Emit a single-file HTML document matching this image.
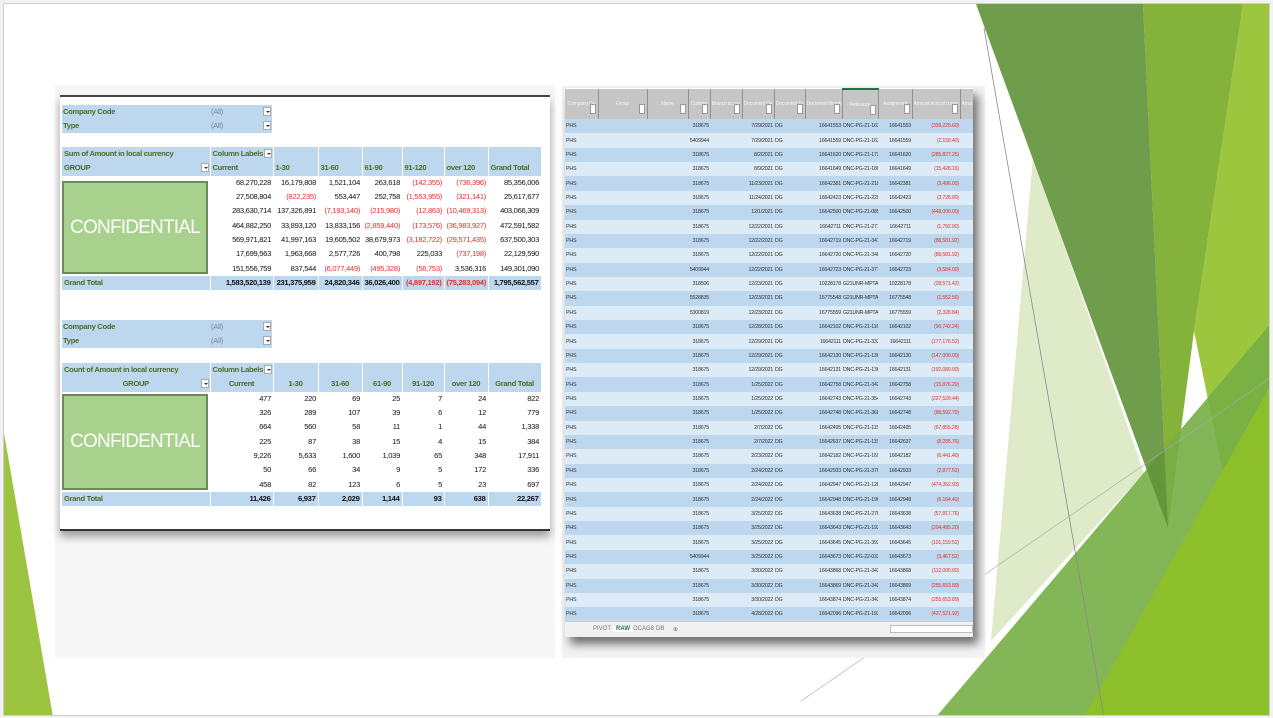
<!DOCTYPE html>
<html><head><meta charset="utf-8">
<style>
*{margin:0;padding:0;box-sizing:border-box}
html,body{width:1273px;height:718px;overflow:hidden;background:#f2f2f2}
#slide{position:absolute;left:3px;top:3px;width:1267px;height:713px;background:#fff;border:1px solid #cfcfcf;overflow:hidden}
svg.bg{position:absolute;left:0;top:0}
.abs{position:absolute}
#leftwrap{left:55px;top:85px;width:500px;height:573px;background:#f6f6f6}
#piv{left:60px;top:95px;width:490px;height:436px;background:#fff;border-top:2px solid #444;border-bottom:2px solid #333;box-shadow:0 6px 8px rgba(0,0,0,.35)}
.pt{position:absolute;left:62px;width:479px;border-collapse:collapse;table-layout:fixed;font-family:"Liberation Sans Narrow","Liberation Sans",sans-serif;font-size:7.6px;letter-spacing:-0.3px;color:#111}
.pt td{padding:0 2px;white-space:nowrap;overflow:hidden;line-height:14px;height:14.3px;position:relative}
.pt .h td{background:#bdd7ee;color:#4c6a24;font-weight:bold;border-right:1px solid #fff}
.pt .d td{text-align:right}
.pt .g td{background:#bdd7ee;font-weight:bold;text-align:right;border-right:1px solid #fff}
.pt .g td:first-child{text-align:left;color:#4c6a24}
.r{color:#e8302c}
.dd{display:block;position:absolute;right:1px;top:2px;width:8px;height:9px;background:#fff;border:1px solid #aaa}
.dd:after{content:"";position:absolute;left:2px;top:3px;border-left:2px solid transparent;border-right:2px solid transparent;border-top:2px solid #333}
.flt{position:absolute;left:62px;width:210px;height:28px;background:#bdd7ee;font-family:"Liberation Sans Narrow","Liberation Sans",sans-serif;font-size:7.6px;letter-spacing:-0.3px;font-weight:bold;color:#4c6a24}
.flt div{position:absolute;left:1px;height:14px;line-height:14px}
.flt span.v{position:absolute;left:149px;line-height:14px;color:#7a8a9a;font-weight:normal}
.flt .dd{left:201px;right:auto}
.conf{position:absolute;left:62px;width:146px;background:#a9d18e;border:2px solid #6d8a5a;color:#fff;font-family:"Liberation Sans","DejaVu Sans",sans-serif;font-size:19px;text-align:center;letter-spacing:-0.8px;overflow:hidden;white-space:nowrap}
#rwrap{left:562px;top:86px;width:423px;height:572px;background:#f3f3f3}
#sheet{left:565px;top:88px;width:408px;height:549px;background:#fff;box-shadow:5px 7px 9px rgba(0,0,0,.55);overflow:hidden}
.st{border-collapse:collapse;table-layout:fixed;width:408px;font-family:"Liberation Sans Narrow","Liberation Sans",sans-serif;font-size:5.3px;letter-spacing:-0.2px;color:#333}
.st td{white-space:nowrap;overflow:hidden;padding:0 1px;height:14.37px;line-height:14px}
.st tr.hd td{height:30px;background:#c6c6c6;color:#f4f4f4;border-right:1px solid #8e8e8e;text-align:center;position:relative;font-size:5px}
.st tr.hd td i{position:absolute;right:2px;top:15px;width:6px;height:10px;background:#fff;border:1px solid #999}
.st tr:nth-child(even) td{background:#bdd7ee}
.st tr:nth-child(odd):not(.hd) td{background:#ddebf7}
.st td.n{text-align:right}
.st td.a{text-align:right;color:#e8302c}
#tabs{position:absolute;left:0;top:533px;width:408px;height:16px;background:#f0f0f0;border-top:1px solid #ccc;font-family:"Liberation Sans",sans-serif;font-size:6px;color:#777}
#tabs span{position:absolute;top:4px}
</style></head><body>
<div id="slide">
<svg class="bg" width="1267" height="713" viewBox="3 3 1267 713">
 <polygon points="3,432 52,716 3,716" fill="#9cc440"/>
 <polygon points="1032,156 1143,472 990,640" fill="#dfeac8"/>
 <polygon points="1242,3 1272,3 1272,716 1193,330" fill="#9cc63e"/>
 <polygon points="1142,3 1242,3 1193,330 1167,527" fill="#85b23a"/>
 <polygon points="935,716 1272,320 1272,716" fill="#76ae45" opacity="0.9"/>
 <polygon points="975,3 1142,3 1167,527" fill="#5f9238" opacity="0.9"/>
 <polygon points="1083,716 1272,380 1272,716" fill="#8dbf2b"/>
 <line x1="983" y1="27" x2="1103" y2="716" stroke="#8a8a8a" stroke-width="0.8"/>
 <line x1="800" y1="700" x2="1272" y2="375" stroke="#aaa" stroke-width="0.6"/>
</svg>
</div>

<div class="abs" id="leftwrap"></div>
<div class="abs" id="piv"></div>

<div class="flt" style="top:105px"><div style="top:0">Company Code</div><div style="top:14px">Type</div><span class="v" style="top:0">(All)</span><span class="v" style="top:14px">(All)</span><i class="dd" style="top:2px"></i><i class="dd" style="top:16px"></i></div>

<table class="pt" style="top:147px">
<colgroup><col style="width:148px"><col style="width:63px"><col style="width:45px"><col style="width:44px"><col style="width:40px"><col style="width:42px"><col style="width:44px"><col style="width:53px"></colgroup>
<tr class="h"><td>Sum of Amount in local currency</td><td>Column Labels<i class="dd"></i></td><td></td><td></td><td></td><td></td><td></td><td></td></tr>
<tr class="h"><td>GROUP<i class="dd"></i></td><td>Current</td><td>1-30</td><td>31-60</td><td>61-90</td><td>91-120</td><td>over 120</td><td>Grand Total</td></tr>
<tr class="d"><td></td><td>68,270,228</td><td>16,179,808</td><td>1,521,104</td><td>263,618</td><td class="r">(142,355)</td><td class="r">(736,396)</td><td>85,356,006</td></tr>
<tr class="d"><td></td><td>27,508,804</td><td class="r">(822,235)</td><td>553,447</td><td>252,758</td><td class="r">(1,553,955)</td><td class="r">(321,141)</td><td>25,617,677</td></tr>
<tr class="d"><td></td><td>283,630,714</td><td>137,326,891</td><td class="r">(7,193,140)</td><td class="r">(215,980)</td><td class="r">(12,863)</td><td class="r">(10,469,313)</td><td>403,066,309</td></tr>
<tr class="d"><td></td><td>464,882,250</td><td>33,893,120</td><td>13,833,156</td><td class="r">(2,859,440)</td><td class="r">(173,576)</td><td class="r">(36,983,927)</td><td>472,591,582</td></tr>
<tr class="d"><td></td><td>569,971,821</td><td>41,997,163</td><td>19,605,502</td><td>38,679,973</td><td class="r">(3,182,722)</td><td class="r">(29,571,435)</td><td>637,500,303</td></tr>
<tr class="d"><td></td><td>17,699,563</td><td>1,963,668</td><td>2,577,726</td><td>400,798</td><td>225,033</td><td class="r">(737,198)</td><td>22,129,590</td></tr>
<tr class="d"><td></td><td>151,556,759</td><td>837,544</td><td class="r">(6,077,449)</td><td class="r">(495,328)</td><td class="r">(56,753)</td><td>3,536,316</td><td>149,301,090</td></tr>
<tr class="g"><td>Grand Total</td><td>1,583,520,139</td><td>231,375,959</td><td>24,820,346</td><td>36,026,400</td><td class="r">(4,897,192)</td><td class="r">(75,283,094)</td><td>1,795,562,557</td></tr>
</table>
<div class="conf" style="top:181px;height:93px;line-height:89px">CONFIDENTIAL</div>

<div class="flt" style="top:320px"><div style="top:0">Company Code</div><div style="top:14px">Type</div><span class="v" style="top:0">(All)</span><span class="v" style="top:14px">(All)</span><i class="dd" style="top:2px"></i><i class="dd" style="top:16px"></i></div>

<table class="pt" style="top:363px">
<colgroup><col style="width:148px"><col style="width:63px"><col style="width:45px"><col style="width:44px"><col style="width:40px"><col style="width:42px"><col style="width:44px"><col style="width:53px"></colgroup>
<tr class="h"><td>Count of Amount in local currency</td><td>Column Labels<i class="dd"></i></td><td></td><td></td><td></td><td></td><td></td><td></td></tr>
<tr class="h" style="text-align:center"><td>GROUP<i class="dd"></i></td><td>Current</td><td>1-30</td><td>31-60</td><td>61-90</td><td>91-120</td><td>over 120</td><td>Grand Total</td></tr>
<tr class="d"><td></td><td>477</td><td>220</td><td>69</td><td>25</td><td>7</td><td>24</td><td>822</td></tr>
<tr class="d"><td></td><td>326</td><td>289</td><td>107</td><td>39</td><td>6</td><td>12</td><td>779</td></tr>
<tr class="d"><td></td><td>664</td><td>560</td><td>58</td><td>11</td><td>1</td><td>44</td><td>1,338</td></tr>
<tr class="d"><td></td><td>225</td><td>87</td><td>38</td><td>15</td><td>4</td><td>15</td><td>384</td></tr>
<tr class="d"><td></td><td>9,226</td><td>5,633</td><td>1,600</td><td>1,039</td><td>65</td><td>348</td><td>17,911</td></tr>
<tr class="d"><td></td><td>50</td><td>66</td><td>34</td><td>9</td><td>5</td><td>172</td><td>336</td></tr>
<tr class="d"><td></td><td>458</td><td>82</td><td>123</td><td>6</td><td>5</td><td>23</td><td>697</td></tr>
<tr class="g"><td>Grand Total</td><td>11,426</td><td>6,937</td><td>2,029</td><td>1,144</td><td>93</td><td>638</td><td>22,267</td></tr>
</table>
<div class="conf" style="top:394px;height:96px;line-height:92px">CONFIDENTIAL</div>

<div class="abs" id="rwrap"></div>
<div class="abs" id="sheet">
<table class="st">
<colgroup><col style="width:33px"><col style="width:49px"><col style="width:41px"><col style="width:22px"><col style="width:32px"><col style="width:32px"><col style="width:31px"><col style="width:37px"><col style="width:36px"><col style="width:34px"><col style="width:48px"><col style="width:13px"></colgroup>
<tr class="hd"><td>Company Co<i></i></td><td>Group<i></i></td><td>Name<i></i></td><td>Custom<i></i></td><td>Branch accou<i></i></td><td>Document Da<i></i></td><td>Document Ty<i></i></td><td>Document Numb<i></i></td><td style="border-top:2px solid #217346">Reference<i></i></td><td>Assignment<i></i></td><td>Amount in local curren<i></i></td><td>Amoun</td></tr>
<tr><td>PHS</td><td></td><td></td><td class="n">318675</td><td></td><td class="n">7/29/2021</td><td>DG</td><td class="n">16641553</td><td>DNC-PG-21-163</td><td class="n">16641553</td><td class="a">(339,225.60)</td><td></td></tr>
<tr><td>PHS</td><td></td><td></td><td class="n">5409944</td><td></td><td class="n">7/29/2021</td><td>DG</td><td class="n">16641559</td><td>DNC-PG-21-163AY</td><td class="n">16641559</td><td class="a">(2,158.40)</td><td></td></tr>
<tr><td>PHS</td><td></td><td></td><td class="n">318675</td><td></td><td class="n">8/2/2021</td><td>DG</td><td class="n">16641620</td><td>DNC-PG-21-173A</td><td class="n">16641620</td><td class="a">(285,827.25)</td><td></td></tr>
<tr><td>PHS</td><td></td><td></td><td class="n">318675</td><td></td><td class="n">8/9/2021</td><td>DG</td><td class="n">16641649</td><td>DNC-PG-21-180A</td><td class="n">16641649</td><td class="a">(15,428.16)</td><td></td></tr>
<tr><td>PHS</td><td></td><td></td><td class="n">318675</td><td></td><td class="n">11/23/2021</td><td>DG</td><td class="n">16642381</td><td>DNC-PG-21-218B</td><td class="n">16642381</td><td class="a">(3,496.00)</td><td></td></tr>
<tr><td>PHS</td><td></td><td></td><td class="n">318675</td><td></td><td class="n">11/24/2021</td><td>DG</td><td class="n">16642423</td><td>DNC-PG-21-220C</td><td class="n">16642423</td><td class="a">(3,728.00)</td><td></td></tr>
<tr><td>PHS</td><td></td><td></td><td class="n">318675</td><td></td><td class="n">12/1/2021</td><td>DG</td><td class="n">16642500</td><td>DNC-PG-21-085D</td><td class="n">16642500</td><td class="a">(448,000.00)</td><td></td></tr>
<tr><td>PHS</td><td></td><td></td><td class="n">318675</td><td></td><td class="n">12/22/2021</td><td>DG</td><td class="n">16642711</td><td>DNC-PG-21-277C</td><td class="n">16642711</td><td class="a">(1,792.00)</td><td></td></tr>
<tr><td>PHS</td><td></td><td></td><td class="n">318675</td><td></td><td class="n">12/22/2021</td><td>DG</td><td class="n">16642719</td><td>DNC-PG-21-341B</td><td class="n">16642719</td><td class="a">(88,581.92)</td><td></td></tr>
<tr><td>PHS</td><td></td><td></td><td class="n">318675</td><td></td><td class="n">12/22/2021</td><td>DG</td><td class="n">16642720</td><td>DNC-PG-21-348B</td><td class="n">16642720</td><td class="a">(88,581.92)</td><td></td></tr>
<tr><td>PHS</td><td></td><td></td><td class="n">5409944</td><td></td><td class="n">12/22/2021</td><td>DG</td><td class="n">16642723</td><td>DNC-PG-21-377B</td><td class="n">16642723</td><td class="a">(3,584.00)</td><td></td></tr>
<tr><td>PHS</td><td></td><td></td><td class="n">318506</td><td></td><td class="n">12/23/2021</td><td>DG</td><td class="n">10228178</td><td>G21UNR-MPTA006</td><td class="n">10228178</td><td class="a">(28,571.42)</td><td></td></tr>
<tr><td>PHS</td><td></td><td></td><td class="n">5528835</td><td></td><td class="n">12/23/2021</td><td>DG</td><td class="n">16775548</td><td>G21UNR-MPTA006</td><td class="n">16775548</td><td class="a">(1,552.56)</td><td></td></tr>
<tr><td>PHS</td><td></td><td></td><td class="n">5300819</td><td></td><td class="n">12/23/2021</td><td>DG</td><td class="n">16775559</td><td>G21UNR-MPTA006</td><td class="n">16775559</td><td class="a">(2,328.84)</td><td></td></tr>
<tr><td>PHS</td><td></td><td></td><td class="n">318675</td><td></td><td class="n">12/28/2021</td><td>DG</td><td class="n">16642102</td><td>DNC-PG-21-116B</td><td class="n">16642102</td><td class="a">(96,742.24)</td><td></td></tr>
<tr><td>PHS</td><td></td><td></td><td class="n">318675</td><td></td><td class="n">12/29/2021</td><td>DG</td><td class="n">16642111</td><td>DNC-PG-21-333B</td><td class="n">16642111</td><td class="a">(177,176.52)</td><td></td></tr>
<tr><td>PHS</td><td></td><td></td><td class="n">318675</td><td></td><td class="n">12/29/2021</td><td>DG</td><td class="n">16642130</td><td>DNC-PG-21-136A</td><td class="n">16642130</td><td class="a">(147,000.00)</td><td></td></tr>
<tr><td>PHS</td><td></td><td></td><td class="n">318675</td><td></td><td class="n">12/29/2021</td><td>DG</td><td class="n">16642131</td><td>DNC-PG-21-136B</td><td class="n">16642131</td><td class="a">(192,080.00)</td><td></td></tr>
<tr><td>PHS</td><td></td><td></td><td class="n">318675</td><td></td><td class="n">1/25/2022</td><td>DG</td><td class="n">16642758</td><td>DNC-PG-21-342</td><td class="n">16642758</td><td class="a">(15,876.20)</td><td></td></tr>
<tr><td>PHS</td><td></td><td></td><td class="n">318675</td><td></td><td class="n">1/25/2022</td><td>DG</td><td class="n">16642743</td><td>DNC-PG-21-354A</td><td class="n">16642743</td><td class="a">(227,529.44)</td><td></td></tr>
<tr><td>PHS</td><td></td><td></td><td class="n">318675</td><td></td><td class="n">1/25/2022</td><td>DG</td><td class="n">16642748</td><td>DNC-PG-21-368B</td><td class="n">16642748</td><td class="a">(88,592.70)</td><td></td></tr>
<tr><td>PHS</td><td></td><td></td><td class="n">318675</td><td></td><td class="n">2/7/2022</td><td>DG</td><td class="n">16642495</td><td>DNC-PG-21-115E</td><td class="n">16642495</td><td class="a">(67,855.28)</td><td></td></tr>
<tr><td>PHS</td><td></td><td></td><td class="n">318675</td><td></td><td class="n">2/7/2022</td><td>DG</td><td class="n">16642637</td><td>DNC-PG-21-115F</td><td class="n">16642637</td><td class="a">(8,285.76)</td><td></td></tr>
<tr><td>PHS</td><td></td><td></td><td class="n">318675</td><td></td><td class="n">2/23/2022</td><td>DG</td><td class="n">16642182</td><td>DNC-PG-21-169D</td><td class="n">16642182</td><td class="a">(6,441.40)</td><td></td></tr>
<tr><td>PHS</td><td></td><td></td><td class="n">318675</td><td></td><td class="n">2/24/2022</td><td>DG</td><td class="n">16642933</td><td>DNC-PG-21-376C</td><td class="n">16642933</td><td class="a">(2,877.53)</td><td></td></tr>
<tr><td>PHS</td><td></td><td></td><td class="n">318675</td><td></td><td class="n">2/24/2022</td><td>DG</td><td class="n">16642947</td><td>DNC-PG-21-128A</td><td class="n">16642947</td><td class="a">(474,352.93)</td><td></td></tr>
<tr><td>PHS</td><td></td><td></td><td class="n">318675</td><td></td><td class="n">2/24/2022</td><td>DG</td><td class="n">16642948</td><td>DNC-PG-21-196B</td><td class="n">16642948</td><td class="a">(6,164.40)</td><td></td></tr>
<tr><td>PHS</td><td></td><td></td><td class="n">318675</td><td></td><td class="n">3/25/2022</td><td>DG</td><td class="n">16643638</td><td>DNC-PG-21-276G</td><td class="n">16643638</td><td class="a">(57,817.76)</td><td></td></tr>
<tr><td>PHS</td><td></td><td></td><td class="n">318675</td><td></td><td class="n">3/25/2022</td><td>DG</td><td class="n">16643643</td><td>DNC-PG-21-193C</td><td class="n">16643643</td><td class="a">(204,495.20)</td><td></td></tr>
<tr><td>PHS</td><td></td><td></td><td class="n">318675</td><td></td><td class="n">3/25/2022</td><td>DG</td><td class="n">16643645</td><td>DNC-PG-21-393D</td><td class="n">16643645</td><td class="a">(101,159.52)</td><td></td></tr>
<tr><td>PHS</td><td></td><td></td><td class="n">5409944</td><td></td><td class="n">3/25/2022</td><td>DG</td><td class="n">16643673</td><td>DNC-PG-22-033A</td><td class="n">16643673</td><td class="a">(3,467.52)</td><td></td></tr>
<tr><td>PHS</td><td></td><td></td><td class="n">318675</td><td></td><td class="n">3/30/2022</td><td>DG</td><td class="n">16643868</td><td>DNC-PG-21-342C-A</td><td class="n">16643868</td><td class="a">(112,000.00)</td><td></td></tr>
<tr><td>PHS</td><td></td><td></td><td class="n">318675</td><td></td><td class="n">3/30/2022</td><td>DG</td><td class="n">16643869</td><td>DNC-PG-21-342C-A</td><td class="n">16643869</td><td class="a">(255,653.89)</td><td></td></tr>
<tr><td>PHS</td><td></td><td></td><td class="n">318675</td><td></td><td class="n">3/30/2022</td><td>DG</td><td class="n">16643874</td><td>DNC-PG-21-342C-A</td><td class="n">16643874</td><td class="a">(255,653.89)</td><td></td></tr>
<tr><td>PHS</td><td></td><td></td><td class="n">318675</td><td></td><td class="n">4/28/2022</td><td>DG</td><td class="n">16642096</td><td>DNC-PG-21-193D</td><td class="n">16642096</td><td class="a">(427,521.92)</td><td></td></tr>
</table>
<div id="tabs"><span style="left:28px">PIVOT</span><span style="left:48px;color:#217346;font-weight:bold;background:#fff;padding:0 3px">RAW</span><span style="left:68px">OCAG8</span><span style="left:91px">DB</span><span style="left:108px">⊕</span><span style="left:325px;top:3px;width:83px;height:8px;background:#fff;border:1px solid #bbb"></span></div>
</div>
</body></html>
